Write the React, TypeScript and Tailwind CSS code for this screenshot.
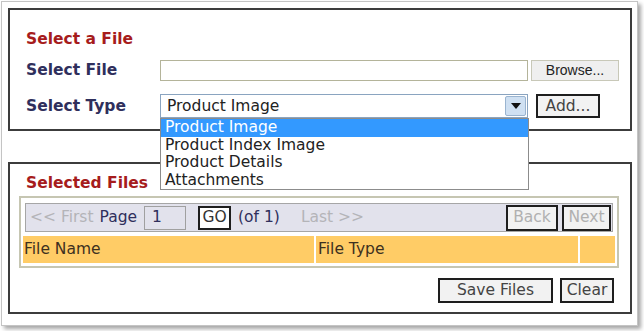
import React from "react";

const verdana = { fontFamily: '"DejaVu Sans", Verdana, sans-serif' };

function GrayButton({ label, className }: { label: string; className: string }) {
  return (
    <button
      className={`flex items-center justify-center bg-[#f2f2f2] border-2 border-[#1e1e1e] text-[15.5px] leading-none ${className}`}
      style={verdana}
    >
      {label}
    </button>
  );
}

export default function App() {
  const types = ["Product Image", "Product Index Image", "Product Details", "Attachments"];

  return (
    <div className="w-[644px] h-[331px] bg-white pl-[1px] pt-[1px]" style={verdana}>
      <div className="w-[637px] h-[325px] bg-white border border-[#c4c4c4] shadow-[3px_3px_4px_rgba(0,0,0,0.35)] pl-[6px] pt-[6px]">
        {/* Select a File */}
        <div className="relative z-10 w-[624px] h-[123px] border-2 border-[#3c3c3c] pl-[16px] pt-[20px]">
          <h2 className="text-[15.5px] leading-[18px] font-bold text-[#a61c1c]">Select a File</h2>

          <div className="flex items-center mt-[11px]">
            <div className="w-[134px] text-[15.5px] font-bold text-[#2f2f5c]">Select File</div>
            <div className="w-[368px] h-[21px] border border-[#b4b49a] bg-white" />
            <button
              className="ml-[3px] w-[88px] h-[21px] bg-[#efefef] border border-[#c8c8b8] text-[14px] text-[#222] flex items-center justify-center"
              style={{ fontFamily: '"Liberation Sans", Arial, sans-serif' }}
            >
              Browse...
            </button>
          </div>

          <div className="flex items-center mt-[12px]">
            <div className="w-[134px] text-[15.5px] font-bold text-[#2f2f5c]">Select Type</div>
            <div className="relative w-[368px] h-[24px]">
              <div className="flex h-full border border-[#8aa4c0] bg-white">
                <div className="flex-1 flex items-center pl-[6px] text-[15.5px] text-[#222]">Product Image</div>
                <div className="w-[21px] m-[1px] flex items-center justify-center bg-[#cfe0f2] border border-[#9ab4d0] rounded-[2px]">
                  <svg width="10" height="6" viewBox="0 0 10 6">
                    <path d="M0 0h10L5 6z" fill="#111" />
                  </svg>
                </div>
              </div>
              <div className="absolute left-0 top-[24px] w-[369px] border border-[#8c8c8c] bg-white">
                {types.map((t, i) => (
                  <div
                    key={t}
                    className={`h-[17.5px] flex items-center pl-[4px] text-[15.5px] ${
                      i === 0 ? "bg-[#3399ff] text-white" : "text-[#222]"
                    }`}
                  >
                    {t}
                  </div>
                ))}
              </div>
            </div>
            <GrayButton label="Add..." className="ml-[8px] w-[64px] h-[24px] text-[#444]" />
          </div>
        </div>

        {/* Selected Files */}
        <div className="mt-[31px] w-[624px] h-[152px] border-2 border-[#3c3c3c] pt-[10px]">
          <h2 className="pl-[16px] text-[15.5px] leading-[18px] font-bold text-[#a61c1c]">Selected Files</h2>

          <div className="ml-[9px] mt-[4px] w-[600px] h-[72px] border-2 border-[#c6c6b2] p-[2px]">
            <div className="mx-[2px] mt-[3px] h-[29px] border border-[#a6a6a6] bg-[#e2e2ec] flex items-center pl-[4px] pr-[1px] text-[15.5px]">
              <span className="text-[#b4b4b8]">&lt;&lt; First</span>
              <span className="ml-[6px] text-[#2f2f5c]">Page</span>
              <div className="ml-[7px] w-[42px] h-[24px] border border-[#a0a0a0] bg-[#e2e2ec] flex items-center pl-[7px] text-[#2f2f5c]">
                1
              </div>
              <GrayButton label="GO" className="ml-[12px] w-[33px] h-[24px] !bg-white text-[#333]" />
              <span className="ml-[7px] text-[#2f2f5c]">(of 1)</span>
              <span className="ml-[21px] text-[#b4b4b8]">Last &gt;&gt;</span>
              <div className="flex-1" />
              <GrayButton label="Back" className="w-[52px] h-[26px] text-[#b0b0b0]" />
              <GrayButton label="Next" className="ml-[4px] w-[49px] h-[26px] text-[#b0b0b0]" />
            </div>
            <div className="mt-[4px] h-[27px] flex text-[15.5px] text-[#3d3020]">
              <div className="w-[291px] bg-[#ffcc66] flex items-center pl-[1px]">File Name</div>
              <div className="ml-[2px] w-[262px] bg-[#ffcc66] flex items-center pl-[2px]">File Type</div>
              <div className="ml-[2px] flex-1 bg-[#ffcc66]" />
            </div>
          </div>

          <div className="flex justify-end pr-[16px] mt-[10px]">
            <GrayButton label="Save Files" className="w-[115px] h-[25px] text-[#444]" />
            <GrayButton label="Clear" className="ml-[7px] w-[54px] h-[25px] text-[#444]" />
          </div>
        </div>
      </div>
    </div>
  );
}
